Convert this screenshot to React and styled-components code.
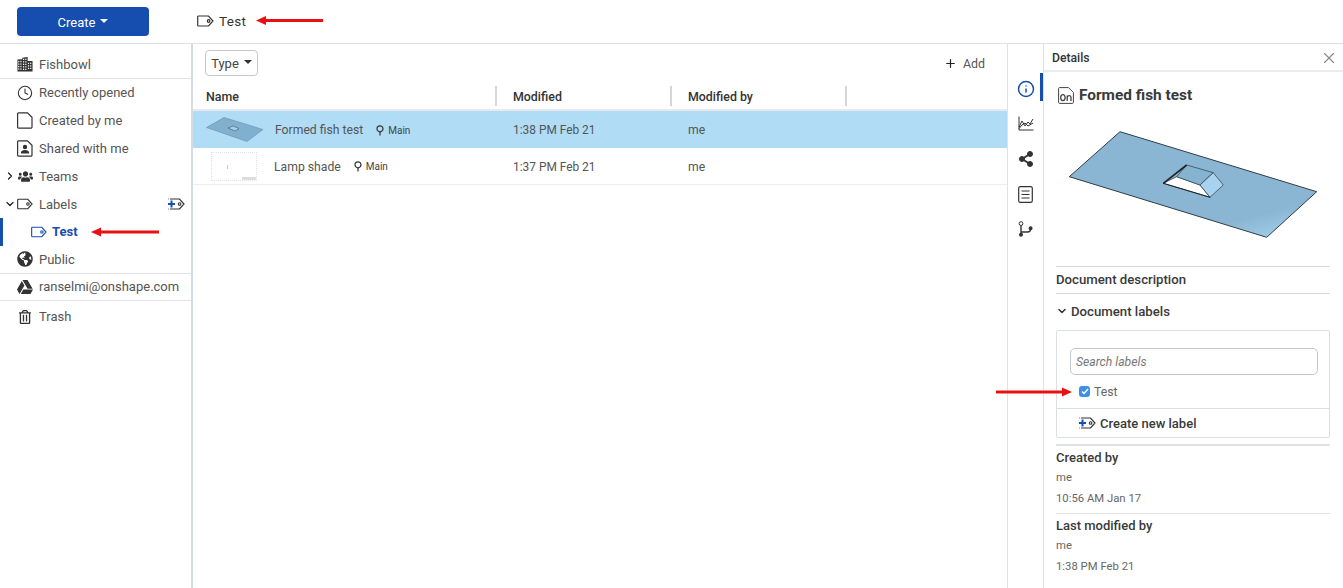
import React from "react"
import styled, { createGlobalStyle } from "styled-components"
import { FaUsers, FaRegTrashAlt, FaGlobeAmericas, FaGoogleDrive, FaShareAlt } from "react-icons/fa"
import { Clock, Info, X, Plus, ChevronRight, ChevronDown } from "lucide-react"

const GlobalStyle = createGlobalStyle`
  html, body {
    margin: 0;
    padding: 0;
    height: 588px;
    overflow: hidden;
    background: #fff;
    font-family: "Roboto", "Liberation Sans", sans-serif;
    color: #444;
  }
  * { box-sizing: border-box; }
`

const Page = styled.div`
  width: 1343px;
  height: 588px;
  display: flex;
  flex-direction: column;
`

const TopBar = styled.header`
  height: 44px;
  flex: none;
  display: flex;
  align-items: center;
  padding-left: 17px;
  border-bottom: 1px solid #dde2e8;
`

const CreateButton = styled.button`
  width: 132px;
  height: 29px;
  border: none;
  border-radius: 4px;
  background: #154eae;
  color: #fff;
  font: 400 13px "Roboto", sans-serif;
  padding-top: 2px;
  display: flex;
  align-items: center;
  justify-content: center;
  gap: 5px;
`

const Caret = styled.span`
  width: 0;
  height: 0;
  border-left: 4px solid transparent;
  border-right: 4px solid transparent;
  border-top: 4px solid ${(p) => p.color || "#333"};
  margin-bottom: 2px;
`

const Crumb = styled.div`
  margin-left: 48px;
  margin-bottom: 2px;
  display: flex;
  align-items: center;
  gap: 5px;
  font-size: 13.5px;
  letter-spacing: 0.3px;
  color: #333;
`

const ArrowWrap = styled.span`
  display: inline-flex;
  margin-left: ${(p) => p.$ml || 0}px;
`

const Body = styled.div`
  flex: 1;
  display: flex;
  min-height: 0;
`

const Sidebar = styled.nav`
  width: 193px;
  flex: none;
  border-right: 2px solid #d6dce4;
  display: flex;
  flex-direction: column;
`

const SideRow = styled.div`
  position: relative;
  height: ${(p) => p.$h || 27.8}px;
  flex: none;
  display: flex;
  align-items: center;
  padding-left: ${(p) => (p.$nested ? 31 : 17)}px;
  padding-top: ${(p) => p.$pt || 0}px;
  gap: ${(p) => (p.$nested ? 5 : 6)}px;
  font-size: 13px;
  color: ${(p) => (p.$active ? "#154eae" : "#555")};
  font-weight: ${(p) => (p.$active ? 700 : 400)};
  border-bottom: ${(p) => (p.$divider ? "1px solid #dfe3e8" : "none")};
`

const ActiveBar = styled.span`
  position: absolute;
  left: 0;
  top: 0;
  bottom: 0;
  width: 3px;
  background: #154eae;
`

const Toggle = styled.span`
  position: absolute;
  left: 4px;
  top: 50%;
  transform: translateY(-50%);
  display: flex;
  color: #222;
`

const RowAction = styled.span`
  position: absolute;
  right: 6px;
  top: 50%;
  transform: translateY(-50%);
  display: flex;
`

const SideArrow = styled.span`
  position: absolute;
  left: 91px;
  top: 50%;
  transform: translateY(-50%);
  display: flex;
`

const IconSlot = styled.span`
  width: 16px;
  display: flex;
  justify-content: center;
  color: #333;
  flex: none;
`

const Main = styled.main`
  flex: 1;
  min-width: 0;
  display: flex;
  flex-direction: column;
`

const Filters = styled.div`
  height: 38px;
  flex: none;
  display: flex;
  align-items: center;
  justify-content: space-between;
  padding: 0 22px 0 12px;
`

const TypeButton = styled.button`
  width: 53px;
  height: 26px;
  background: #fff;
  border: 1px solid #c4c8cc;
  border-radius: 4px;
  font: 400 13px "Roboto", sans-serif;
  color: #444;
  display: flex;
  align-items: center;
  justify-content: center;
  gap: 5px;
`

const AddLink = styled.div`
  display: flex;
  align-items: center;
  gap: 6px;
  font-size: 12.4px;
  color: #555;
`

const columns = "304px 175px 175px 1fr"

const HeaderRow = styled.div`
  height: 29px;
  flex: none;
  display: grid;
  grid-template-columns: ${columns};
  border-bottom: 2px solid #e8eaed;
  align-items: center;
`

const HeaderCell = styled.div`
  height: 20px;
  display: flex;
  align-items: center;
  padding-left: ${(p) => (p.$first ? 13 : 16)}px;
  padding-top: 1px;
  font-size: 12.4px;
  font-weight: 500;
  color: #333;
  border-right: 2px solid #d4d6d8;
`

const Row = styled.div`
  height: 37px;
  flex: none;
  display: grid;
  grid-template-columns: ${columns};
  align-items: center;
  padding-top: 1px;
  background: ${(p) => (p.$selected ? "#b0dcf6" : "#fff")};
  border-bottom: ${(p) => (p.$selected ? "none" : "1px solid #eceef0")};
  font-size: 12.2px;
  color: #555;
`

const NameCell = styled.div`
  display: flex;
  align-items: center;
  padding-left: ${(p) => p.$pad}px;
`

const Thumb = styled.span`
  width: ${(p) => p.$w}px;
  display: flex;
  flex: none;
`

const BlankThumb = styled.span`
  width: 46px;
  height: 29px;
  border: 1px dotted #e2e2e2;
  display: flex;
  flex: none;
  margin-right: 17px;
  position: relative;
  &::after {
    content: "";
    position: absolute;
    left: 15px;
    top: 12px;
    width: 1px;
    height: 4px;
    background: #ccc;
  }
  &::before {
    content: "";
    position: absolute;
    right: 0;
    bottom: 0;
    width: 14px;
    height: 3px;
    background: #ddd;
  }
`

const Branch = styled.span`
  display: flex;
  align-items: center;
  gap: 4px;
  margin-left: 13px;
  font-size: 10px;
  color: #444;
`

const Cell = styled.div`
  padding-left: 16px;
  font-size: ${(p) => (p.$date ? "11.9px" : "12.2px")};
`

const Rail = styled.div`
  width: 37px;
  flex: none;
  border-left: 1px solid #dde2e8;
  border-right: 1px solid #dde2e8;
  display: flex;
  flex-direction: column;
  padding-top: 27px;
`

const RailItem = styled.div`
  height: 35.2px;
  position: relative;
  display: flex;
  align-items: center;
  justify-content: center;
  color: ${(p) => (p.$active ? "#154eae" : "#333")};
  &::after {
    content: "";
    display: ${(p) => (p.$active ? "block" : "none")};
    position: absolute;
    right: 0;
    top: 2px;
    width: 3px;
    height: 28px;
    background: #154eae;
  }
`

const Details = styled.aside`
  width: 299px;
  flex: none;
  display: flex;
  flex-direction: column;
`

const DetailsHead = styled.div`
  height: 28px;
  flex: none;
  display: flex;
  align-items: center;
  justify-content: space-between;
  padding: 1px 5px 0 8px;
  border-bottom: 2px solid #e8ebef;
  font-size: 12.2px;
  font-weight: 500;
  color: #333;
`

const DetailsBody = styled.div`
  padding: 0 13px 0 12px;
  display: flex;
  flex-direction: column;
`

const DocTitle = styled.div`
  display: flex;
  align-items: center;
  gap: 5px;
  height: 46px;
  padding-left: 2px;
  font-size: 15.4px;
  font-weight: 700;
  color: #3a3a3a;
`

const Preview = styled.div`
  height: 148px;
  padding-left: 12px;
  padding-top: 12px;
  flex: none;
`

const Section = styled.div`
  height: ${(p) => p.$h}px;
  flex: none;
  display: flex;
  align-items: center;
  gap: 3px;
  padding-bottom: 2px;
  border-top: 1px solid #d8dadc;
  font-size: 13.2px;
  font-weight: 500;
  color: #3a3a3a;
`

const LabelsBox = styled.div`
  height: 108px;
  flex: none;
  border: 1px solid #dcdfe2;
  border-radius: 2px;
  display: flex;
  flex-direction: column;
`

const SearchInput = styled.input`
  width: 248px;
  height: 27px;
  margin: 17px 0 0 13px;
  padding: 0 5px;
  border: 1px solid #c4c8cc;
  border-radius: 5px;
  font: italic 400 12.2px "Roboto", sans-serif;
  color: #666;
  &::placeholder { color: #777; opacity: 1; }
`

const CheckRow = styled.div`
  position: relative;
  height: 34px;
  flex: none;
  display: flex;
  align-items: center;
  gap: 4px;
  padding-left: 22px;
  font-size: 12.2px;
  color: #666;
  border-bottom: 1px solid #dcdfe2;
`

const Check = styled.span`
  width: 11px;
  height: 11px;
  border-radius: 3px;
  background: #3d8fe8;
  display: flex;
  align-items: center;
  justify-content: center;
`

const CheckArrow = styled.span`
  position: absolute;
  left: -61px;
  top: 50%;
  transform: translateY(-50%) scaleX(-1);
  display: flex;
`

const NewLabel = styled.div`
  flex: 1;
  display: flex;
  align-items: center;
  gap: 4px;
  padding-left: 21px;
  font-size: 13px;
  font-weight: 500;
  color: #3a3a3a;
`

const Meta = styled.div`
  flex: none;
  height: ${(p) => p.$h}px;
  margin-top: ${(p) => p.$mt || 0}px;
  padding-top: 4px;
  border-top: ${(p) => p.$bw || 1}px solid #e0e2e4;
`

const MetaTitle = styled.div`
  font-size: 13px;
  font-weight: 500;
  line-height: 16px;
  color: #3a3a3a;
`

const MetaText = styled.div`
  font-size: 11.3px;
  line-height: 21px;
  color: #666;
  margin-top: ${(p) => p.$mt || 0}px;
`

const RedArrow = ({ width = 68 }) => (
  <svg width={width} height="11" viewBox={`0 0 ${width} 11`}>
    <path d={`M0 5.5 L10 1 V4 H${width} V7 H10 V10 Z`} fill="#e81010" />
  </svg>
)

const BuildingIcon = () => {
  const windows = []
  const cols = [2, 4.5, 7.5, 10, 13, 15.5]
  cols.forEach((x, i) => {
    const top = i < 2 ? 4.5 : i < 4 ? 2 : 6.5
    for (let y = top; y < 14; y += 2.8) {
      windows.push(<rect key={`${x}-${y}`} x={x - 0.7} y={y} width="1.3" height="1.5" />)
    }
  })
  return (
    <svg width="18" height="17" viewBox="0 0 18 17">
      <path d="M0.5 3 L6 2.5 V0.8 L12 0 V4.5 H17.5 V16.5 H0.5 Z" fill="#333" />
      <g fill="#fff">{windows}</g>
    </svg>
  )
}

const TagIcon = ({ color = "#333" }) => (
  <svg width="17" height="12" viewBox="0 0 17 12" fill="none" stroke={color} strokeWidth="1.2">
    <path d="M1.5 1 H11.5 L16 6 L11.5 11 H1.5 A0.8 0.8 0 0 1 0.7 10.2 V1.8 A0.8 0.8 0 0 1 1.5 1 Z" />
    <circle cx="11.6" cy="6" r="1.3" />
  </svg>
)

const TagPlusIcon = () => (
  <svg width="18" height="12" viewBox="0 0 18 12" fill="none">
    <path d="M3 1 H12.5 L17 6 L12.5 11 H3 M1 1 H1.6 M1 11 H1.6" stroke="#333" strokeWidth="1.2" />
    <circle cx="12.6" cy="6" r="1.3" stroke="#333" strokeWidth="1.1" />
    <path d="M1 6 H8 M4.5 2.6 V9.4" stroke="#154eae" strokeWidth="2" />
  </svg>
)

const DocIcon = () => (
  <svg width="16" height="17" viewBox="0 0 16 17" fill="none" stroke="#333" strokeWidth="1.2">
    <path d="M1.6 0.8 H10.5 L15 5.3 V15 A1.2 1.2 0 0 1 13.8 16.2 H1.6 A1 1 0 0 1 0.6 15.2 V1.8 A1 1 0 0 1 1.6 0.8 Z" />
  </svg>
)

const SharedIcon = () => (
  <svg width="16" height="17" viewBox="0 0 16 17" fill="none">
    <path d="M1.6 0.8 H10.5 L15 5.3 V15 A1.2 1.2 0 0 1 13.8 16.2 H1.6 A1 1 0 0 1 0.6 15.2 V1.8 A1 1 0 0 1 1.6 0.8 Z" stroke="#333" strokeWidth="1.2" />
    <circle cx="8" cy="7" r="2.2" fill="#333" />
    <path d="M3.8 13.6 C3.8 10.8 5.6 10 8 10 C10.4 10 12.2 10.8 12.2 13.6 Z" fill="#333" />
  </svg>
)

const PinIcon = () => (
  <svg width="8" height="11" viewBox="0 0 8 11" fill="none" stroke="#333" strokeWidth="1.2">
    <circle cx="4" cy="3.8" r="3" />
    <path d="M4 6.8 V10.6" />
  </svg>
)

const ChartIcon = () => (
  <svg width="16" height="15" viewBox="0 0 16 15" fill="none" stroke="#333" strokeWidth="1">
    <path d="M1 0.5 V14 H15.5" />
    <path d="M1 11 L4 5 L7 10 L10 6 L12 8 L15 3" />
    <path d="M1 12.5 L4 9 L7 7 L10 10 L15 7" />
  </svg>
)

const ListIcon = () => (
  <svg width="15" height="17" viewBox="0 0 15 17" fill="none" stroke="#333" strokeWidth="1.2">
    <rect x="0.7" y="0.7" width="13.6" height="15.6" rx="1.6" />
    <path d="M3.5 5 H11.5 M3.5 8.5 H11.5 M3.5 12 H11.5" />
  </svg>
)

const BranchIcon = () => (
  <svg width="15" height="16" viewBox="0 0 15 16" fill="none" stroke="#333" strokeWidth="1.4">
    <circle cx="3" cy="2.6" r="1.9" strokeWidth="1" />
    <path d="M3 4.6 V14" />
    <circle cx="3" cy="13.8" r="1.3" fill="#333" />
    <path d="M3 11 H9.5 C11.5 11 12.6 10 12.6 7.8" />
    <circle cx="12.6" cy="7.2" r="1.3" fill="#333" />
  </svg>
)

const OnshapeDocIcon = () => (
  <svg width="16" height="17" viewBox="0 0 16 17" fill="none" stroke="#444" strokeWidth="1">
    <path d="M1.4 0.6 H10.5 L15.4 5.5 V15.4 A1 1 0 0 1 14.4 16.4 H1.4 A1 1 0 0 1 0.6 15.4 V1.4 A1 1 0 0 1 1.4 0.6 Z" />
    <ellipse cx="4.9" cy="10.6" rx="2.2" ry="3" strokeWidth="1.3" />
    <path d="M9.2 14 V8.5 M9.2 10 C10 8 13 8 13 10.4 V14" strokeWidth="1.3" />
  </svg>
)

const PartThumb = () => (
  <svg width="58" height="26" viewBox="0 0 58 26">
    <path d="M0.5 10.5 L18 0.5 L57 12.5 L41 24.5 Z" fill="#7fb0cf" stroke="#6a90a8" strokeWidth="0.6" />
    <path d="M22 11 L27 9 L33 11.5 L29 14 Z" fill="#a9cde4" stroke="#4a6a80" strokeWidth="0.7" />
  </svg>
)

const PartPreview = () => (
  <svg width="252" height="110" viewBox="0 0 252 110">
    <defs>
      <linearGradient id="plate" x1="0.3" y1="0.3" x2="0.8" y2="1.1">
        <stop offset="0.7" stopColor="#8ab6d3" />
        <stop offset="1" stopColor="#a6d3ef" />
      </linearGradient>
    </defs>
    <path d="M52 1.7 L248.7 61.7 L198.7 107.3 L1.3 46.7 Z" fill="url(#plate)" stroke="#2e3c46" strokeWidth="1" />
    <path d="M95.3 53.3 L118.7 35 L145.3 42.7 L155.3 55 L142 67.3 Z" fill="#8ab6d3" />
    <path d="M95.3 53.3 L108.7 46.7 L132 55 L142 67.3 Z" fill="#fff" stroke="#2e3c46" strokeWidth="0.7" />
    <path d="M108.7 46.7 L118.7 35 L145.3 42.7 L132 55 Z" fill="#86b3d0" stroke="#2e3c46" strokeWidth="0.7" />
    <path d="M132 55 L145.3 42.7 L155.3 55 L142 67.3 Z" fill="#a8d3f0" stroke="#2e3c46" strokeWidth="0.7" />
    <path d="M95.3 53.3 L118.7 35" stroke="#222" strokeWidth="1.6" />
    <path d="M95.3 53.3 L142 67.3" stroke="#222" strokeWidth="1" />
  </svg>
)

const App = () => (
  <Page>
    <GlobalStyle />
    <TopBar>
      <CreateButton>
        Create <Caret color="#fff" />
      </CreateButton>
      <Crumb>
        <TagIcon />
        Test
        <ArrowWrap $ml={5}>
          <RedArrow width={67} />
        </ArrowWrap>
      </Crumb>
    </TopBar>
    <Body>
      <Sidebar>
        <SideRow $h={35} $pt={7} $divider>
          <IconSlot><BuildingIcon /></IconSlot>
          Fishbowl
        </SideRow>
        <SideRow><IconSlot><Clock size={16} strokeWidth={1.6} /></IconSlot>Recently opened</SideRow>
        <SideRow><IconSlot><DocIcon /></IconSlot>Created by me</SideRow>
        <SideRow><IconSlot><SharedIcon /></IconSlot>Shared with me</SideRow>
        <SideRow>
          <Toggle><ChevronRight size={12} strokeWidth={2.5} /></Toggle>
          <IconSlot><FaUsers size={15} /></IconSlot>Teams
        </SideRow>
        <SideRow>
          <Toggle><ChevronDown size={12} strokeWidth={2.5} /></Toggle>
          <IconSlot><TagIcon /></IconSlot>Labels
          <RowAction><TagPlusIcon /></RowAction>
        </SideRow>
        <SideRow $nested $active>
          <ActiveBar />
          <IconSlot><TagIcon color="#154eae" /></IconSlot>Test
          <SideArrow><RedArrow width={68} /></SideArrow>
        </SideRow>
        <SideRow $divider><IconSlot><FaGlobeAmericas size={16} /></IconSlot>Public</SideRow>
        <SideRow $divider><IconSlot><FaGoogleDrive size={16} /></IconSlot>ranselmi@onshape.com</SideRow>
        <SideRow $pt={3}><IconSlot><FaRegTrashAlt size={14} /></IconSlot>Trash</SideRow>
      </Sidebar>
      <Main>
        <Filters>
          <TypeButton>Type <Caret /></TypeButton>
          <AddLink><Plus size={13} color="#222" strokeWidth={2.2} /> Add</AddLink>
        </Filters>
        <HeaderRow>
          <HeaderCell $first>Name</HeaderCell>
          <HeaderCell>Modified</HeaderCell>
          <HeaderCell>Modified by</HeaderCell>
        </HeaderRow>
        <Row $selected>
          <NameCell $pad={13}>
            <Thumb $w={69}><PartThumb /></Thumb>
            Formed fish test
            <Branch><PinIcon /> Main</Branch>
          </NameCell>
          <Cell $date>1:38 PM Feb 21</Cell>
          <Cell>me</Cell>
        </Row>
        <Row>
          <NameCell $pad={18}>
            <BlankThumb />
            Lamp shade
            <Branch><PinIcon /> Main</Branch>
          </NameCell>
          <Cell $date>1:37 PM Feb 21</Cell>
          <Cell>me</Cell>
        </Row>
      </Main>
      <Rail>
        <RailItem $active><Info size={18} strokeWidth={2} /></RailItem>
        <RailItem><ChartIcon /></RailItem>
        <RailItem><FaShareAlt size={16} /></RailItem>
        <RailItem><ListIcon /></RailItem>
        <RailItem><BranchIcon /></RailItem>
      </Rail>
      <Details>
        <DetailsHead>
          Details
          <X size={18} color="#888" strokeWidth={1.5} />
        </DetailsHead>
        <DetailsBody>
          <DocTitle><OnshapeDocIcon /> Formed fish test</DocTitle>
          <Preview><PartPreview /></Preview>
          <Section $h={27}>Document description</Section>
          <Section $h={37}>
            <ChevronDown size={12} strokeWidth={3} color="#333" />
            Document labels
          </Section>
          <LabelsBox>
            <SearchInput placeholder="Search labels" readOnly />
            <CheckRow>
              <CheckArrow>
                <RedArrow width={76} />
              </CheckArrow>
              <Check>
                <svg width="8" height="7" viewBox="0 0 8 7" fill="none" stroke="#fff" strokeWidth="1.5">
                  <path d="M1 3.5 L3 5.5 L7 1" />
                </svg>
              </Check>
              Test
            </CheckRow>
            <NewLabel><TagPlusIcon /> Create new label</NewLabel>
          </LabelsBox>
          <Meta $h={69} $mt={6} $bw={2}>
            <MetaTitle>Created by</MetaTitle>
            <MetaText $mt={1}>me</MetaText>
            <MetaText>10:56 AM Jan 17</MetaText>
          </Meta>
          <Meta $h={70}>
            <MetaTitle>Last modified by</MetaTitle>
            <MetaText $mt={1}>me</MetaText>
            <MetaText>1:38 PM Feb 21</MetaText>
          </Meta>
        </DetailsBody>
      </Details>
    </Body>
  </Page>
)

export default App
